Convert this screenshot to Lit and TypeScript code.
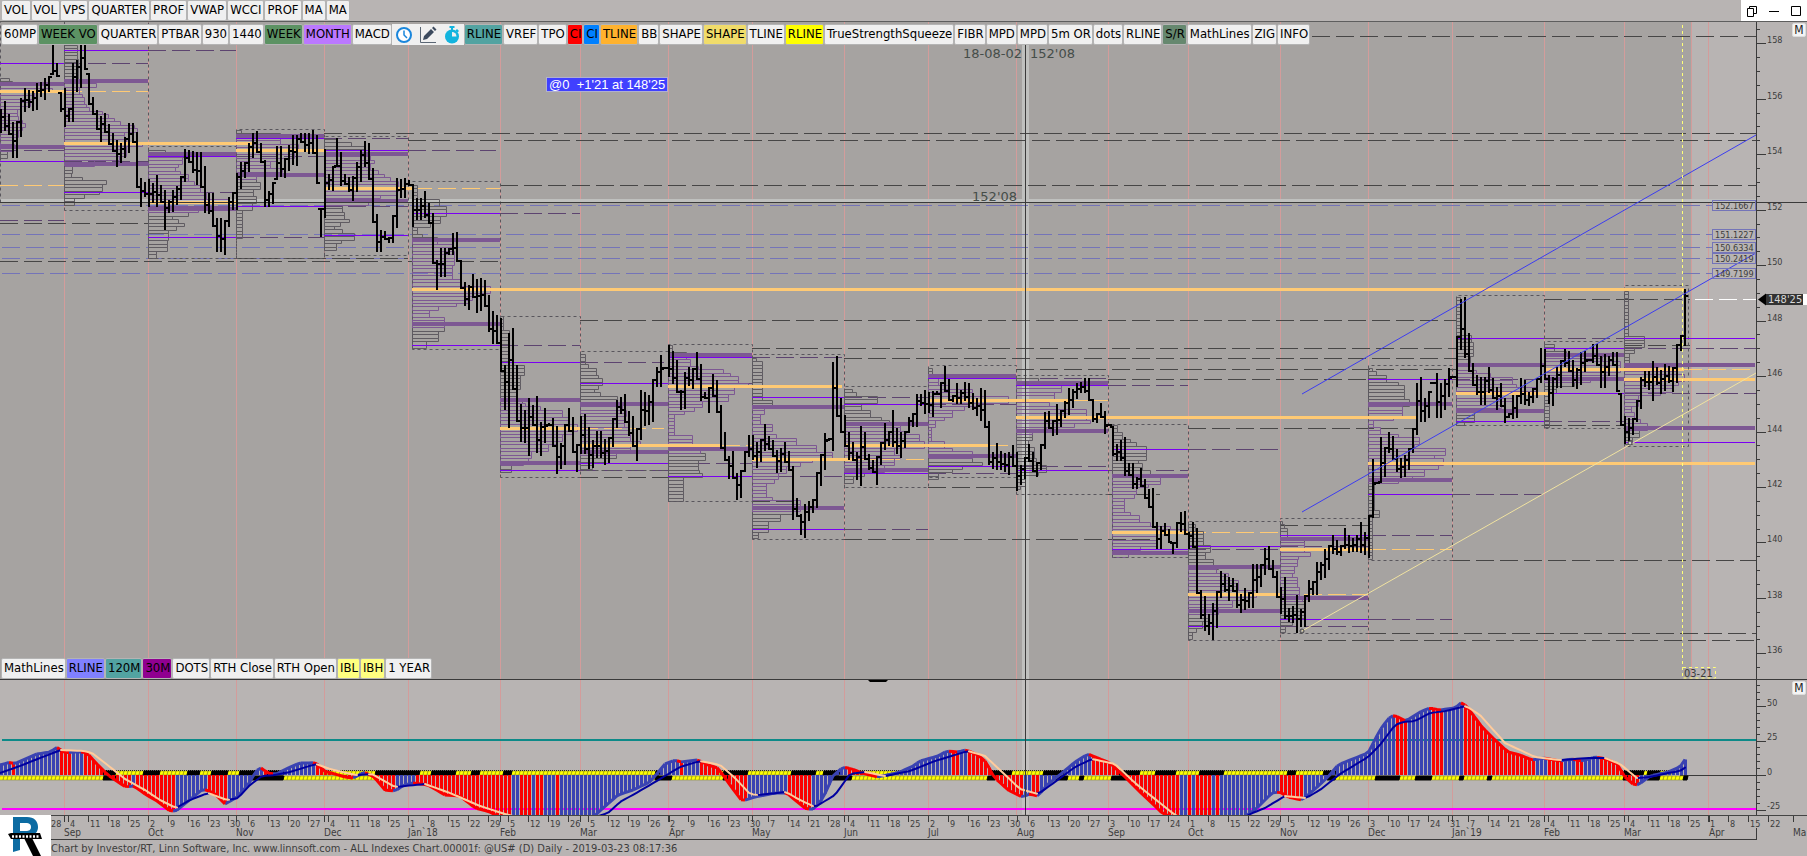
import { LitElement, html, svg, css } from "lit";
import { customElement, property } from "lit/decorators.js";
import { classMap } from "lit/directives/class-map.js";

/* ---------- toolbars ---------- */

type Tool = { label: string; tone?: string; icon?: "clock" | "pencil" | "timer" };

const t = (label: string, tone = ""): Tool => ({ label, tone });

const TOP_TOOLS: Tool[] = ["VOL", "VOL", "VPS", "QUARTER", "PROF", "VWAP", "WCCI", "PROF", "MA", "MA"].map((l) => t(l));

const CHART_TOOLS: Tool[] = [
  t("60MP"), t("WEEK VO", "green"), t("QUARTER"), t("PTBAR"), t("930"), t("1440"),
  t("WEEK", "green"), t("MONTH", "violet"), t("MACD"),
  { label: "Clock", icon: "clock" }, { label: "Draw", icon: "pencil" }, { label: "Timer", icon: "timer" },
  t("RLINE", "teal"), t("VREF"), t("TPO"), t("CI", "red"), t("CI", "blue"), t("TLINE", "orange"),
  t("BB"), t("SHAPE"), t("SHAPE", "sand"), t("TLINE"), t("RLINE", "yellow"), t("TrueStrengthSqueeze"),
  t("FIBR"), t("MPD"), t("MPD"), t("5m OR"), t("dots"), t("RLINE"), t("S/R", "moss"),
  t("MathLines"), t("ZIG"), t("INFO"),
];

const BOTTOM_TOOLS: Tool[] = [
  t("MathLines"), t("RLINE", "lilac"), t("120M", "teal"), t("30M", "plum"), t("DOTS"), t("RTH Close"),
  t("RTH Open"), t("IBL", "lemon"), t("IBH", "lemon"), t("1 YEAR"),
];

/* ---------- daily bars: high / low pairs in chart units ---------- */

const BARS: number[] = [
  109,133, 101,131, 114,135, 122,158, 121,158, 98,137, 88,112, 90,108, 91,111, 83,110,
  82,97, 78,100, 76,92, 43,75, 63,77, 92,112, 88,127, 108,122, 63,122, 60,92,
  44,88, 44,70, 73,105, 97,115, 110,130, 116,142, 113,133, 124,145, 133,152, 140,167,
  143,163, 137,158, 123,153, 123,143, 132,188, 178,207, 182,197, 179,207, 183,203, 175,207,
  185,203, 190,230, 200,213, 190,212, 186,205, 176,200, 149,182, 150,163, 151,173, 152,185,
  152,188, 166,213, 193,214, 193,227, 218,252, 218,252, 220,255, 197,227, 192,210, 173,210,
  162,189, 162,178, 143,172, 133,158, 131,153, 143,163, 160,207, 191,207, 182,204, 146,180,
  146,177, 158,178, 145,171, 135,165, 135,166, 133,143, 133,152, 133,154, 130,154, 135,184,
  208,237, 149,218, 174,190, 166,191, 138,167, 152,186, 174,185, 177,192, 176,201, 162,192,
  150,182, 141,167, 143,180, 168,223, 214,252, 230,252, 231,240, 237,243, 215,243, 178,228,
  179,198, 178,198, 180,186, 184,227, 198,220, 198,220, 191,218, 203,224, 213,264, 260,290,
  248,277, 248,277, 248,255, 233,255, 232,262, 260,289, 282,306, 285,310, 274,298, 279,313,
  278,311, 280,307, 295,332, 311,344, 315,344, 318,372, 365,410, 333,428, 328,390, 365,422,
  404,442, 410,443, 398,456, 405,426, 396,453, 422,456, 408,443, 423,426, 418,447, 426,474,
  443,469, 424,465, 408,432, 417,453, 444,472, 416,454, 414,454, 427,469, 440,468, 431,458,
  431,458, 439,465, 437,463, 418,447, 400,428, 397,414, 394,423, 411,436, 416,447, 428,461,
  390,440, 392,426, 395,425, 379,422, 367,387, 355,387, 367,369, 345,377, 351,384, 360,393,
  390,410, 372,409, 367,386, 368,389, 352,380, 364,401, 392,399, 387,413, 374,397, 380,413,
  405,449, 432,461, 456,479, 451,479, 473,500, 470,498, 451,472, 435,457, 435,460, 442,468,
  439,462, 424,451, 436,450, 440,457, 450,473, 448,472, 442,463, 451,471, 466,520, 498,517,
  514,535, 504,538, 501,521, 499,513, 472,508, 454,486, 433,470, 438,441, 362,451, 356,417,
  398,433, 415,447, 432,460, 442,461, 452,480, 426,486, 432,460, 454,470, 460,473, 456,485,
  442,465, 423,450, 431,446, 410,447, 428,454, 432,458, 431,448, 417,433, 413,427, 394,427,
  394,406, 390,414, 392,413, 391,417, 391,395, 382,408, 366,392, 379,401, 395,402, 383,404,
  390,404, 382,401, 383,408, 393,410, 398,416, 388,421, 390,428, 421,465, 452,469, 443,470,
  451,470, 453,472, 452,475, 445,467, 452,491, 465,485, 457,479, 444,462, 452,472, 462,477,
  444,470, 412,449, 411,429, 420,436, 404,435, 410,427, 401,418, 388,415, 389,408, 383,399,
  382,393, 378,393, 378,401, 399,422, 413,423, 403,418, 411,434, 424,426, 426,456, 444,461,
  440,461, 437,476, 463,476, 463,489, 477,489, 468,487, 479,499, 489,508, 488,528, 522,549,
  526,549, 523,536, 529,543, 542,554, 522,548, 512,532, 511,535, 532,549, 522,548, 528,594,
  590,619, 596,631, 614,635, 603,640, 591,628, 571,598, 574,592, 577,601, 578,592, 583,608,
  594,613, 588,610, 592,608, 564,608, 564,593, 564,587, 548,575, 546,570, 560,578, 571,598,
  587,614, 577,619, 608,622, 606,623, 595,633, 609,627, 595,627, 580,602, 581,595, 562,595,
  562,580, 549,578, 545,570, 535,554, 540,555, 545,556, 528,549, 535,553, 538,552, 535,552,
  522,553, 532,555, 515,558, 459,518, 482,484, 437,483, 447,477, 432,453, 436,460, 449,472,
  458,478, 455,477, 448,470, 428,453, 383,435, 377,422, 398,422, 391,418, 382,384, 373,418,
  383,418, 379,410, 368,397, 376,378, 336,387, 299,350, 297,358, 333,372, 363,386, 375,395,
  377,405, 377,405, 367,393, 378,399, 387,410, 383,407, 398,423, 413,418, 395,419, 395,418,
  378,404, 380,405, 392,406, 388,403, 378,398, 348,383, 349,380, 375,404, 377,406, 367,388,
  360,388, 349,367, 351,372, 360,387, 368,389, 352,385, 351,372, 359,361, 344,363, 344,366,
  356,388, 354,388, 356,376, 352,366, 352,392, 393,426, 416,444, 418,443, 418,435, 400,422,
  377,409, 371,387, 371,390, 361,401, 367,385, 370,394, 364,391, 366,383, 367,392, 344,383,
  335,351, 289,346,
];

/* ---------- monthly volume profiles ---------- */

type Profile = {
  x: number; end: number; top: number; bottom: number;
  value: [number, number];
  mid: [number, number];
  range: [number, number];
  rows: number[];
};

const P = (
  x: number, end: number, top: number, bottom: number,
  value: [number, number], mid: [number, number], range: [number, number], rows: number[],
): Profile => ({ x, end, top, bottom, value, mid, range, rows });

const PROFILES: Profile[] = [
  P(0, 64, 20, 202, [84, 147], [91, 64], [63, 161],
    [78,9, 81,12, 84,40, 88,52, 92,34, 98,30, 104,20, 110,17, 116,18, 120,22, 123,25, 127,22, 131,18, 136,12, 143,14, 148,12, 152,7]),
  P(64, 148, 20, 210, [81, 164], [143, 254], [50, 192],
    [45,13, 59,14, 80,26, 84,32, 88,15, 92,18, 96,20, 104,22, 108,25, 112,38, 115,44, 118,50, 121,56, 125,70, 128,73, 131,60, 138,62, 141,78, 145,62, 155,55, 160,30, 165,8, 173,7, 176,18, 180,42, 184,38, 190,35, 194,20, 198,10]),
  P(148, 236, 146, 258, [154, 209], [202, 236], [156, 237],
    [150,17, 153,40, 157,34, 164,30, 168,27, 172,32, 175,40, 182,46, 186,52, 193,58, 197,72, 200,80, 205,50, 211,40, 215,24, 219,30, 223,36, 227,28, 231,20, 235,20, 240,19, 251,8]),
  P(236, 324, 129, 258, [136, 175], [150, 324], [138, 206],
    [130,5, 133,44, 143,62, 150,58, 157,40, 161,34, 168,46, 172,20, 178,20, 182,24, 190,17, 197,20, 201,16, 208,6, 232,6]),
  P(324, 408, 136, 255, [154, 201], [188, 414], [150, 235],
    [139,13, 143,27, 147,40, 152,46, 160,50, 164,46, 170,54, 174,60, 177,66, 180,74, 190,72, 194,56, 198,44, 203,18, 210,20, 217,25, 221,16, 226,10, 230,18, 233,30, 238,17, 243,12]),
  P(412, 500, 181, 349, [240, 324], [289, 1684], [213, 345],
    [185,5, 198,27, 205,34, 215,28, 222,18, 227,5, 234,10, 237,25, 243,40, 250,42, 266,40, 278,48, 284,78, 292,60, 299,56, 303,44, 307,26, 311,17, 315,20, 318,32, 331,26, 341,14]),
  P(500, 580, 316, 477, [400, 463], [428, 580], [362, 470],
    [316,3, 330,9, 350,8, 365,24, 376,20, 390,16, 400,22, 404,25, 407,40, 410,62, 417,68, 424,77, 431,72, 435,62, 442,56, 445,48, 452,31, 457,28, 463,23, 466,11]),
  P(580, 668, 351, 470, [404, 452], [445, 722], [383, 463],
    [354,5, 365,8, 368,16, 376,18, 379,22, 386,18, 390,14, 393,20, 396,37, 401,42, 408,46, 415,44, 428,48, 434,50, 441,60, 445,50, 452,36, 459,24, 463,12]),
  P(668, 752, 344, 501, [355, 449], [386, 842], [357, 476],
    [345,4, 351,18, 358,22, 364,30, 368,55, 372,62, 375,70, 382,80, 386,66, 393,60, 400,34, 407,26, 411,16, 414,6, 434,24, 444,32, 452,37, 458,30, 470,31, 474,34, 478,15, 494,15]),
  P(752, 844, 354, 539, [407, 508], [459, 858], [397, 529],
    [358,4, 361,10, 400,20, 408,12, 415,8, 423,20, 430,12, 434,24, 438,44, 445,64, 452,80, 459,60, 463,48, 467,34, 473,26, 480,22, 484,14, 497,20, 500,48, 511,40, 515,28, 521,16, 532,6]),
  P(844, 928, 386, 487, [424, 470], [445, 990], [404, 473],
    [389,8, 393,12, 396,33, 404,17, 411,26, 417,37, 421,45, 425,56, 430,62, 434,75, 441,80, 448,50, 455,56, 459,50, 466,40, 473,20, 477,9]),
  P(928, 1016, 365, 477, [376, 456], [400, 1070], [378, 466],
    [368,4, 379,10, 386,20, 390,44, 394,68, 396,80, 402,50, 407,36, 411,24, 415,16, 419,7, 427,3, 441,16, 448,24, 452,44, 460,54, 464,34, 468,24, 472,10]),
  P(1016, 1108, 375, 494, [383, 431], [417, 1417], [385, 470],
    [378,22, 386,45, 393,38, 398,28, 402,33, 406,40, 410,70, 418,74, 422,58, 426,30, 431,16, 440,12, 448,18, 456,20, 463,30, 470,22, 475,9, 484,4]),
  P(1112, 1188, 424, 557, [476, 553], [532, 1188], [449, 549],
    [425,5, 433,10, 438,18, 442,24, 445,34, 459,26, 463,30, 469,38, 477,48, 483,36, 487,24, 493,22, 499,12, 511,18, 515,27, 522,38, 525,58, 529,74, 533,44, 546,28, 550,16]),
  P(1188, 1280, 521, 640, [567, 611], [594, 1280], [546, 626],
    [524,7, 530,15, 546,22, 550,17, 560,25, 564,30, 570,28, 574,40, 581,50, 588,68, 595,60, 599,44, 608,30, 613,20, 622,14, 629,8, 633,4]),
  P(1280, 1368, 518, 633, [539, 598], [549, 1368], [535, 619],
    [521,2, 525,4, 529,7, 537,24, 551,30, 554,18, 558,17, 565,14, 572,12, 578,17, 588,19, 596,22, 602,25, 612,25, 619,12, 626,5]),
  P(1368, 1452, 365, 560, [404, 480], [463, 1755], [379, 494],
    [368,4, 372,8, 376,18, 380,30, 386,36, 400,41, 407,34, 417,25, 421,5, 428,12, 434,30, 438,51, 445,46, 448,77, 455,66, 459,75, 466,70, 470,56, 474,44, 478,30, 482,6, 511,11, 518,4, 554,4]),
  P(1456, 1544, 295, 425, [365, 411], [393, 1550], [338, 421],
    [297,4, 334,15, 343,17, 356,14, 366,16, 370,20, 374,34, 378,56, 382,60, 387,80, 395,56, 402,45, 407,36, 413,18, 420,8]),
  P(1544, 1624, 341, 428, [355, 379], [369, 1684], [348, 393],
    [344,10, 351,22, 355,58, 361,76, 372,72, 379,46, 383,30, 387,12, 394,5, 420,5]),
  P(1624, 1688, 285, 446, [365, 428], [379, 1755], [338, 442],
    [291,4, 337,20, 345,10, 352,5, 362,14, 366,34, 370,52, 374,60, 380,54, 386,48, 390,36, 394,14, 405,7, 413,10, 418,16, 421,23, 429,15, 438,8]),
];

const GRID_X = [64, 148, 236, 324, 408, 500, 580, 668, 752, 844, 928, 1016, 1108, 1188, 1280, 1368, 1452, 1544, 1624, 1691, 1708];

/* [y, from, to] */
const LEVELS: number[][] = [
  [36, 1312, 1756], [133, 324, 1756], [140, 408, 1756], [185, 500, 1756], [202, 0, 64], [223, 0, 148],
  [261, 0, 500], [258, 236, 408], [320, 580, 1456], [348, 752, 1456], [358, 844, 1456], [369, 1016, 1456],
  [379, 1108, 1456], [428, 1188, 1417], [477, 580, 668], [487, 928, 1016], [494, 1108, 1160], [539, 844, 1160],
  [299, 1544, 1690], [560, 1452, 1756], [633, 1368, 1756], [640, 1280, 1756], [525, 1280, 1368],
  [345, 1624, 1690], [425, 1544, 1624], [501, 752, 800],
];

const QUIET: number[][] = [
  [50, 148, 236], [63, 64, 148], [150, 0, 64], [161, 64, 148], [220, 0, 64], [192, 148, 236], [156, 236, 324], [237, 236, 324],
  [138, 324, 408], [206, 324, 408], [150, 408, 496], [213, 500, 580], [345, 500, 580], [362, 580, 664],
  [470, 580, 668], [463, 668, 752], [383, 668, 752], [357, 752, 844], [476, 752, 844], [397, 844, 928],
  [529, 844, 928], [404, 928, 1016], [473, 928, 1016], [378, 1016, 1108], [466, 1016, 1108], [385, 1108, 1188],
  [470, 1108, 1188], [449, 1188, 1280], [549, 1188, 1280], [546, 1280, 1368], [626, 1280, 1368], [535, 1368, 1452],
  [619, 1368, 1452], [494, 1452, 1544], [379, 1452, 1544], [338, 1544, 1624], [421, 1544, 1624], [348, 1624, 1756], [393, 1624, 1756],
];

const SOFT_POC: number[][] = [
  [91, 64, 148], [185, 0, 64], [188, 414, 500], [428, 580, 664], [445, 722, 752], [445, 990, 1008],
  [459, 858, 928], [400, 1070, 1108], [532, 1188, 1280], [594, 1280, 1368], [549, 1368, 1452], [369, 1684, 1756],
];

const MATH_LINES: [number, string][] = [
  [205, "152.1667"], [234, "151.1227"], [247, "150.6334"], [258, "150.2419"], [273, "149.7199"],
];

/* ---------- oscillator ---------- */

const OSC: number[] = [
  0,765, 11,762, 14,764, 37,754, 50,752, 58,747, 61,750, 66,753, 74,752, 84,752, 88,754, 95,762, 108,775,
  118,782, 126,787, 134,786, 145,794, 157,801, 170,811, 176,811, 187,802, 203,789, 214,793, 225,804, 237,797,
  248,785, 256,771, 261,768, 268,773, 276,774, 288,768, 300,763, 312,763, 315,762, 324,771, 335,774, 345,777,
  354,778, 364,772, 374,777, 385,790, 395,791, 404,785, 413,783, 428,785, 445,795, 460,796, 475,808, 490,812,
  505,820, 560,835, 590,820, 601,810, 618,795, 633,790, 650,782, 665,764, 675,760, 680,762, 688,761, 698,760,
  708,765, 718,768, 730,785, 742,801, 755,797, 775,793, 787,793, 795,800, 806,809, 814,809, 823,798, 833,776,
  843,767, 852,769, 862,773, 878,777, 900,772, 913,766, 920,761, 938,756, 947,751, 958,752, 966,750, 978,755,
  986,762, 994,777, 1008,790, 1022,797, 1030,794, 1038,796, 1047,785, 1062,773, 1075,762, 1088,754, 1100,759,
  1110,763, 1125,777, 1140,792, 1155,806, 1162,813, 1190,825, 1210,840, 1240,820, 1256,809, 1272,793, 1280,792,
  1288,797, 1302,800, 1315,789, 1328,777, 1338,765, 1350,760, 1368,753, 1380,730, 1388,719, 1394,715, 1406,721,
  1420,712, 1430,708, 1440,710, 1455,708, 1462,702, 1468,708, 1482,727, 1495,740, 1508,752, 1520,755, 1532,760,
  1544,758, 1560,761, 1572,759, 1582,761, 1595,757, 1606,759, 1617,764, 1625,777, 1633,784, 1638,785, 1650,776,
  1668,772, 1680,767, 1686,758,
];

const SIGNAL: number[] = [
  0,773, 20,766, 40,758, 61,750, 84,751, 92,753, 105,763, 125,779, 145,790, 160,800, 176,808, 190,800, 208,793,
  227,800, 238,798, 250,785, 262,776, 275,775, 290,772, 316,764, 330,769, 355,775, 372,774, 395,787, 425,784,
  450,793, 480,806, 505,814, 560,828, 608,813, 620,802, 638,792, 655,782, 680,767, 700,761, 720,765, 735,778,
  750,794, 758,795, 786,792, 800,800, 815,807, 835,795, 850,774, 865,772, 885,776, 910,771, 935,761, 968,751,
  985,756, 1000,770, 1020,789, 1038,794, 1055,782, 1075,767, 1092,759, 1115,764, 1135,783, 1155,799, 1175,815,
  1220,835, 1250,814, 1265,808, 1285,796, 1306,798, 1320,790, 1340,774, 1368,757, 1380,745, 1395,725, 1403,722,
  1415,721, 1430,713, 1446,711, 1466,706, 1480,715, 1505,743, 1535,757, 1560,760, 1590,758, 1605,758, 1620,764,
  1637,778, 1650,777, 1668,773, 1680,771, 1686,767,
];

const BLACK_DOTS: number[][] = [
  [103, 115], [142, 158], [187, 198], [211, 227], [238, 283], [375, 418], [431, 453], [471, 478], [502, 511],
  [657, 669], [725, 746], [791, 814], [823, 849], [989, 1009], [1042, 1065], [1078, 1083], [1110, 1138],
  [1154, 1175], [1198, 1222], [1287, 1295], [1323, 1333], [1375, 1397], [1415, 1432], [1459, 1464],
  [1487, 1491], [1625, 1641], [1647, 1660], [1684, 1690],
];

/* stretches of the deep troughs whose direction flips from bar to bar */
const RED_RUNS: number[][] = [[455, 512], [518, 532], [536, 542], [557, 560], [1160, 1178], [1188, 1191], [1197, 1212], [1216, 1220]];
const TROUGHS: number[][] = [[484, 600], [1160, 1240]];

const inside = (x: number, ranges: number[][]) => ranges.some(([a, b]) => x >= a && x <= b);

const curve = (points: number[], x: number): number => {
  for (let i = 2; i < points.length; i += 2) {
    if (x <= points[i]) {
      const [x0, y0, x1, y1] = points.slice(i - 2, i + 2);
      return y0 + ((y1 - y0) * (x - x0)) / (x1 - x0);
    }
  }
  return points[points.length - 1];
};

const ZERO = 775;
const FLOOR = 815;
const PER_POINT = 27.73;
const priceY = (price: number) => 43.3 + (158 - price) * PER_POINT;

/* horizontal segments as a single path */
const segments = (list: number[][]) => list.map(([y, a, b]) => `M${a} ${y}.5H${b}`).join("");

const profilePaths = (p: Profile) => {
  let grey = "";
  let purple = "";
  const [first] = p.rows;
  const last = p.rows[p.rows.length - 2] + 4;
  for (let i = 0; ; i++) {
    const y = Math.round(first + i * 3.47);
    if (y > last) break;
    const next = Math.round(first + (i + 1) * 3.47);
    let w = p.rows[1];
    for (let j = 0; j < p.rows.length; j += 2) if (p.rows[j] <= y + 1) w = p.rows[j + 1];
    const row = `M${p.x + 0.5} ${next + 0.5}V${y + 0.5}h${w}V${next + 0.5}H${p.x}`;
    if (y >= p.value[0] && y <= p.value[1]) purple += row;
    else grey += row;
  }
  return { grey, purple };
};

const priceBars = () => {
  let d = "";
  let prev = 120;
  for (let k = 0; k * 2 < BARS.length; k++) {
    const hi = BARS[2 * k];
    const lo = BARS[2 * k + 1];
    const x = 4 * k;
    const nh = BARS[2 * k + 2] ?? hi;
    const nl = BARS[2 * k + 3] ?? hi + 12;
    const open = Math.min(lo - 2, Math.max(hi, prev));
    const close = Math.min(lo - 2, Math.max(hi, Math.round((nh + nl) / 2)));
    d += `M${x} ${hi}h2V${lo}h-2zM${x - 2} ${open}h2v2h-2zM${x + 2} ${close}h2v2h-2z`;
    prev = close;
  }
  return d;
};

const oscillator = () => {
  let blue = "", red = "", blueLine = "", redLine = "", navy = "", peach = "";
  let yellow = "", black = "";
  for (let k = 0; k <= 421; k++) {
    const x = 4 * k + 1;
    const y = curve(OSC, x);
    const before = curve(OSC, Math.max(0, x - 4));
    const rising = inside(x, TROUGHS) || inside(x, RED_RUNS) ? !inside(x, RED_RUNS) : y <= before;
    const bar = `M${x - 1} ${ZERO}h3V${Math.min(y, FLOOR)}h-3z`;
    const line = `M${x - 4} ${before}L${x} ${y}`;
    if (rising) { blue += bar; blueLine += line; } else { red += bar; redLine += line; }
    const s0 = curve(SIGNAL, Math.max(0, x - 4));
    const s1 = curve(SIGNAL, x);
    if (s1 <= s0) navy += `M${x - 4} ${s0}L${x} ${s1}`;
    else peach += `M${x - 4} ${s0}L${x} ${s1}`;
    const isBlack = inside(x, BLACK_DOTS);
    for (const top of [true, false]) {
      if (top && y < ZERO - 4) continue;
      if (!top && y > ZERO + 4) continue;
      const c = top ? 771 : 776;
      const slant = `M${x - 2} ${c + 4}l1-4h4l-1 4z`;
      if (isBlack) black += slant;
      else yellow += slant;
    }
  }
  return { blue, red, blueLine, redLine, navy, peach, yellow, black };
};

/* ---------- toolbar strip ---------- */

@customElement("tool-strip")
export class ToolStrip extends LitElement {
  @property({ attribute: false }) tools: Tool[] = [];

  static styles = css`
    :host { display: flex; padding-left: 1px; }
    .tool {
      box-sizing: border-box; height: 21px; margin: 0; padding: 0 2px 1px;
      border: 1px solid #b4b4b4; border-radius: 2px; background: #f0f0f0; color: #000;
      font: 13px/18px "DejaVu Sans Condensed", "DejaVu Sans", sans-serif;
      white-space: nowrap;
    }
    :host(.snug) .tool { padding-right: 1px; }
    :host(.snug) .glyph { width: 24px; padding: 1px 2px; border-color: #f0f0f0; border-radius: 0; }
    .glyph svg { display: block; width: 18px; height: 18px; }
    .green { background: #5c9263; }
    .violet { background: #bb78ff; }
    .teal { background: #52a3a1; }
    .red { background: #f00; }
    .blue { background: #0080ff; }
    .orange { background: #ffb22e; }
    .sand { background: #f0dc6a; }
    .yellow { background: #ff0; }
    .moss { background: #66886f; }
    .lilac { background: #8080ff; }
    .plum { background: #900090; }
    .lemon { background: #ffff80; }
  `;

  private glyph(kind: string) {
    if (kind === "clock")
      return html`<svg viewBox="0 0 18 18" aria-hidden="true">
        <circle cx="9" cy="9" r="7" fill="#fff" stroke="#1a86dc" stroke-width="2"></circle>
        <path d="M9 4.500V9l3 3" fill="none" stroke="#1a86dc" stroke-width="1.500"></path>
      </svg>`;
    if (kind === "pencil")
      return html`<svg viewBox="0 0 18 18" aria-hidden="true">
        <path d="M1.500 1v15.500H17" fill="none" stroke="#5a6674" stroke-width="1"></path>
        <path d="M4 14l1-4 7-7 3 3-7 7zM13 2l1.500-1.500 3 3L16 5z" fill="#3c4a5e"></path>
      </svg>`;
    return html`<svg viewBox="0 0 18 18" aria-hidden="true">
      <path d="M6.500 0h5v2h-5zM8 1.500h2V4H8zM14 3l2 2-1.500 1.500-2-2z" fill="#12b4de"></path>
      <circle cx="9" cy="10.500" r="7" fill="#12b4de"></circle>
      <path d="M9 10.500V6a4.500 4.500 0 0 1 4.500 4.500z" fill="#f0f0f0"></path>
    </svg>`;
  }

  render() {
    return this.tools.map((tool) =>
      tool.icon
        ? html`<button class="tool glyph" type="button" aria-label=${tool.label}>${this.glyph(tool.icon)}</button>`
        : html`<button class=${classMap({ tool: true, [tool.tone || "plain"]: true })} type="button">${tool.label}</button>`,
    );
  }
}

/* ---------- page ---------- */

const DAYS = (
  "28 4 11 18 25 2 9 16 23 30 6 13 20 27 4 11 18 25 1 8 15 22 29 5 12 19 26 5 12 19 26 2 9 16 23 30 7 14 21 28 " +
  "4 11 18 25 2 9 16 23 30 6 13 20 27 3 10 17 24 1 8 15 22 29 5 12 19 26 3 10 17 24 31 7 14 21 28 4 11 18 25 " +
  "4 11 18 25 1 8 15 22"
).split(" ");

const MONTHS: [number, string][] = [
  [64, "Sep"], [148, "Oct"], [236, "Nov"], [324, "Dec"], [408, "Jan`18"], [500, "Feb"], [580, "Mar"], [669, "Apr"],
  [752, "May"], [844, "Jun"], [928, "Jul"], [1017, "Aug"], [1108, "Sep"], [1188, "Oct"], [1280, "Nov"],
  [1368, "Dec"], [1452, "Jan`19"], [1544, "Feb"], [1624, "Mar"], [1709, "Apr"], [1793, "Ma"],
];

@customElement("app-root")
export class AppRoot extends LitElement {
  static styles = css`
    :host {
      display: flex; flex-direction: column; min-height: 100vh; overflow: hidden;
      background: #b8b4b3; color: #333;
      font-family: "DejaVu Sans Condensed", "DejaVu Sans", sans-serif;
    }
    header {
      display: flex; justify-content: space-between; height: 21px;
      border-bottom: 1px solid #5e5e5e;
    }
    .window { display: flex; background: #fff; }
    .window button { width: 22px; padding: 0; border: 0; background: none; }
    .window svg { display: block; margin: auto; width: 12px; height: 12px; fill: none; stroke: #000; }
    .pane { position: relative; }
    .pane > svg { display: block; width: 100%; }
    .over-top { position: absolute; top: 2px; left: 0; }
    .over-bottom { position: absolute; bottom: 1px; left: 0; }
    .m {
      position: absolute; top: 1px; right: 1px; width: 14px; height: 14px; padding: 0;
      border: 1px solid #ddd; border-radius: 2px; background: #f4f4f4; color: #222;
      font: 12px/12px "DejaVu Sans Condensed", sans-serif;
    }
    .foot { display: grid; grid-template-columns: 51fr 1756fr; background: #b8b4b3; }
    .logo { grid-row: 1 / 3; display: block; width: 100%; background: #fff; }
    .dates { display: block; width: 100%; }
    .credit { margin: 0; padding-top: 1px; font-size: 11px; line-height: 15px; color: #3c3c3c; white-space: nowrap; }
    text { font-family: "DejaVu Sans Condensed", "DejaVu Sans", sans-serif; fill: #3c3c3c; }
    .axis { font-size: 9px; }
    .month { font-size: 10px; }
    .cursor { font-family: "DejaVu Sans", sans-serif; font-size: 13px; fill: #454d49; }
    .flag { font-family: "Liberation Sans", Arial, sans-serif; font-size: 13px; fill: #fff; }
    .last { font-size: 11px; fill: #d8d8d8; }
    .stamp { font-size: 11px; }
    .grid { stroke: #d39c9b; }
    .ink { stroke: #3a3a3a; }
    .level { stroke: #474646; stroke-dasharray: 18 6; }
    .quiet { stroke: #5d4470; stroke-dasharray: 18 6; }
    .soft { stroke: #ffca74; stroke-dasharray: 18 6; }
    .math { stroke: #7474b8; stroke-dasharray: 18 6; }
    .box { stroke: #59565c; stroke-dasharray: 3 3; fill: none; }
    .row-grey { stroke: #605c62; fill: none; }
    .row-purple { stroke: #7d5893; fill: none; }
    .range { stroke: #7a00f2; fill: none; }
    .value { stroke: #7d5893; stroke-width: 4; }
    .poc { stroke: #ffca74; stroke-width: 3; }
    .trend { stroke: #3c3cf0; }
    .pale { stroke: #f0e2a0; }
    .expiry { stroke: #ffff78; stroke-dasharray: 3 3; fill: none; }
  `;

  private priceAxis() {
    let ticks = "";
    for (let i = -2; i <= 45; i++) {
      const y = Math.round(priceY(158 - i / 2));
      if (y > 24 && y < 678) ticks += `M1757 ${y}.5h${i % 4 === 0 ? 9 : 3}`;
    }
    return svg`
      <path class="ink" d="M1756.500 22V680"></path>
      <path class="ink" d=${ticks}></path>
      ${[158, 156, 154, 152, 150, 148, 146, 144, 142, 140, 138, 136].map(
        (p) => svg`<text class="axis" x="1767" y=${Math.round(priceY(p))}>${p}</text>`)}
    `;
  }

  private profile(p: Profile, i: number) {
    const rows = profilePaths(p);
    const far = i === PROFILES.length - 1 ? 1755 : p.end;
    return svg`
      <path class="row-grey" d=${rows.grey}></path>
      <path class="row-purple" d=${rows.purple}></path>
      <path class="box" d=${`M${p.x}.5 ${p.bottom}.5V${p.top}.5H${p.end}.5V${p.bottom}.5z`}></path>
      <path class="value" d=${`M${p.x} ${p.value[0]}H${far}M${p.x} ${p.value[1]}H${far}`}></path>
      <path class="range" d=${`M${p.x} ${p.range[0]}.5H${far}M${p.x} ${p.range[1]}.5H${far}`}></path>
    `;
  }

  private mainChart() {
    const grid = GRID_X.map((x) => `M${x}.5 22V679`).join("");
    return svg`
      <rect x="0" y="22" width="1692" height="658" fill="#a6a3a1"></rect>
      <path class="grid" d=${grid}></path>
      <path d="M1022 45h7v634h-7zM0 199h1756v4H0z" fill="#bfc0be"></path>
      <path class="math" d=${segments(MATH_LINES.map(([y]) => [y, 2, 1712]))}></path>
      <path class="level" d=${segments(LEVELS)}></path>
      <path class="quiet" d=${segments(QUIET)}></path>
      <path class="soft" d=${segments(SOFT_POC)}></path>
      ${PROFILES.map((p, i) => this.profile(p, i))}
      <path class="poc" d=${PROFILES.map((p) => `M${p.x} ${p.mid[0]}.5H${p.mid[1]}`).join("")}></path>
      <path class="ink" d="M0 202.500H1807M1025.500 45V680"></path>
      <path d=${priceBars()}></path>
      <path class="trend" d="M1302 394L1756 135M1302 512L1756 253"></path>
      <path class="pale" d="M1302 631L1756 373"></path>
      <circle cx="1302" cy="631" r="2" fill="none" stroke="#444"></circle>
      <circle cx="1630" cy="443" r="2" fill="#ccc" stroke="#444"></circle>
      <path class="expiry" d="M1682.500 25V678h33V667.500h-33"></path>
      <text class="stamp" x="1684" y="677">03-21</text>
      ${MATH_LINES.map(([y, label]) => svg`
        <rect x="1712.500" y=${y - 5 + 0.5} width="43" height="10" fill="none" stroke="#7474b8"></rect>
        <text class="axis" x="1715" y=${y + 4}>${label}</text>`)}
      <path d="M1695 299.500H1756" stroke="#fff" stroke-dasharray="18 6"></path>
      ${this.priceAxis()}
      <path d="M1758 299.500l8-6v12z"></path>
      <rect x="1803" y="294" width="4" height="11" fill="#fff"></rect>
      <rect x="1766" y="294" width="37" height="11" fill="#333"></rect>
      <text class="last" x="1768" y="303">148'25</text>
      <text class="cursor" x="1022" y="58" text-anchor="end">18-08-02</text>
      <text class="cursor" x="1030" y="58">152'08</text>
      <text class="cursor" x="1017" y="201" text-anchor="end">152'08</text>
      <rect x="546.500" y="77.500" width="121" height="14" fill="#4040ff" stroke="#b0b0d0"></rect>
      <text class="flag" x="549" y="89" xml:space="preserve">@0&#160; +1'21 at 148'25</text>
      <path class="ink" d="M0 679.500H1807"></path>
    `;
  }

  private study() {
    const grid = GRID_X.filter((x) => x !== 1691).map((x) => `M${x}.5 680V815`).join("");
    const o = oscillator();
    let ticks = "";
    for (let i = -5; i <= 13; i++) ticks += `M1757 ${Math.round(ZERO - i * 6.9)}.5h${i % 5 === 0 ? 9 : 3}`;
    return svg`
      <path class="grid" d=${grid}></path>
      <path d="M1022 680h7v134h-7z" fill="#c3c1c0"></path>
      <path d="M868 680h20l-2 2h-16z"></path>
      <path d="M2 740H1756" stroke="#0d8a88" stroke-width="2"></path>
      <path d="M2 809H1756" stroke="#f0f" stroke-width="2"></path>
      <path class="ink" d="M1680 775.500H1756"></path>
      <path d="M0 770.500H1687M0 779.500H1687" stroke="#111" stroke-dasharray="1 1"></path>
      <path d=${o.yellow} fill="#ff0" stroke="#8a8a1c" stroke-width="0.500"></path>
      <path d=${o.black} fill="#000" stroke="#000"></path>
      <path d=${o.blue} fill="#3a43b2"></path>
      <path d=${o.red} fill="#fb0000"></path>
      <path d=${o.blueLine} stroke="#3a43b2" stroke-width="3"></path>
      <path d=${o.redLine} stroke="#fb0000" stroke-width="3"></path>
      <path d=${o.navy} stroke="#0000a0" stroke-width="2" stroke-linecap="round"></path>
      <path d=${o.peach} stroke="#ffcb9c" stroke-width="2" stroke-linecap="round"></path>
      <path class="ink" d="M1025.500 680V815"></path>
      <path class="ink" d="M1756.500 680V815"></path>
      <path class="ink" d=${ticks}></path>
      ${[[706, "50"], [740, "25"], [775, "0"], [809, "-25"]].map(
        ([y, label]) => svg`<text class="axis" x="1767" y=${y}>${label}</text>`)}
    `;
  }

  private dates() {
    let ticks = "";
    DAYS.forEach((_, i) => { if (i) ticks += `M${48 + 20 * i}.5 816v6`; });
    MONTHS.forEach(([x]) => { ticks += `M${x}.5 816v6`; });
    return svg`
      <path d="M51 815.500H1807" stroke="#444" stroke-width="1"></path>
      <path class="ink" d=${ticks}></path>
      <path class="ink" d="M1756.500 828V840M51 839.500H1757"></path>
      ${DAYS.map((d, i) => svg`<text class="axis" x=${(i ? 50 : 51) + 20 * i} y="827">${d}</text>`)}
      ${MONTHS.map(([x, m]) => svg`<text class="month" x=${x} y="836">${m}</text>`)}
    `;
  }

  render() {
    return html`
      <header>
        <tool-strip .tools=${TOP_TOOLS}></tool-strip>
        <div class="window">
          <button type="button" aria-label="Restore"><svg viewBox="0 0 12 12"><path d="M1.500 3.500h6v8h-6zM3.500 3.500v-2h7v7h-3"></path></svg></button>
          <button type="button" aria-label="Minimize"><svg viewBox="0 0 12 12"><path d="M1 6.500h10"></path></svg></button>
          <button type="button" aria-label="Maximize"><svg viewBox="0 0 12 12"><path d="M1.500 1.500h9v9h-9z"></path></svg></button>
        </div>
      </header>
      <main class="pane">
        <svg viewBox="0 22 1807 658" role="img" aria-label="@US# daily price chart">${this.mainChart()}</svg>
        <tool-strip class="over-top snug" .tools=${CHART_TOOLS}></tool-strip>
        <tool-strip class="over-bottom snug" .tools=${BOTTOM_TOOLS}></tool-strip>
        <button class="m" type="button">M</button>
      </main>
      <section class="pane">
        <svg viewBox="0 680 1807 135" role="img" aria-label="Oscillator">${this.study()}</svg>
        <button class="m" type="button">M</button>
      </section>
      <footer class="foot">
        <svg class="logo" viewBox="0 0 51 41" role="img" aria-label="Investor/RT">
          <path fill="#0c6ba2" d="M13 2h14c7 0 11 4 11 10 0 4-2 7-6 8H13zM20 8v8h6c3 0 5-1 5-4s-2-4-5-4z" fill-rule="evenodd"></path>
          <path fill="#0c6ba2" d="M13 22h7v13l-7 2z"></path>
          <path d="M24 23h8l9 18h-8z"></path>
          <path d="M8 19l3-1h29l2 6H11z"></path>
          <path d="M12 21.500h27" stroke="#fff" stroke-width="2.500" stroke-dasharray="2 1.500"></path>
        </svg>
        <svg class="dates" viewBox="51 815 1756 25" role="img" aria-label="Dates">${this.dates()}</svg>
        <p class="credit">Chart by Investor/RT, Linn Software, Inc. www.linnsoft.com - ALL Indexes Chart.00001f: @US# (D) Daily - 2019-03-23 08:17:36</p>
      </footer>
    `;
  }
}
